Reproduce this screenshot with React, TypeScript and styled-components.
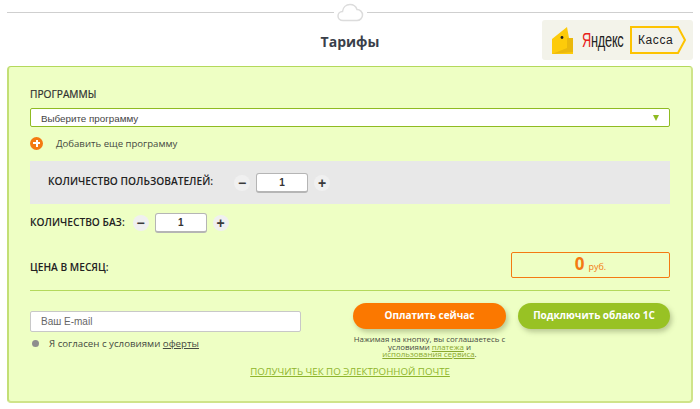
import React from "react";
import styled, { createGlobalStyle } from "styled-components";

const GlobalStyle = createGlobalStyle`
	html, body {
		margin: 0;
		padding: 0;
		background: #fff;
	}

	body {
		font-family: "Open Sans", "Liberation Sans", sans-serif;
		color: #333;
	}
`;

const Page = styled("div")`
	width: 700px;
	height: 409px;
	overflow: hidden;
	padding: 0 7px;
	box-sizing: border-box;
`;

const Divider = styled("div")`
	display: flex;
	align-items: center;
	gap: 3px;
	height: 25px;
`;

const Line = styled("div")`
	flex: 1;
	height: 1px;
	background: #cfcfcf;
`;

const TitleRow = styled("div")`
	display: grid;
	grid-template-columns: 1fr auto 1fr;
	align-items: center;
	height: 40px;
	margin: -5px 0 6px;
`;

const Title = styled("h1")`
	grid-column: 2;
	margin: 2px 0 0;
	font-size: 14px;
	font-weight: 700;
	color: #3a3f4a;
`;

const Badge = styled("div")`
	grid-column: 3;
	justify-self: end;
	display: flex;
	align-items: center;
	width: 151px;
	height: 40px;
	box-sizing: border-box;
	padding-left: 10px;
	background: #f3f3ea;
	border-radius: 3px;
`;

const BadgeWord = styled("span")`
	margin-left: 9px;
	width: 48px;
	font-family: "Liberation Sans", sans-serif;
	font-size: 20px;
	letter-spacing: -0.4px;
	color: #222;
	white-space: nowrap;
	transform: scaleX(0.64);
	transform-origin: left center;

	b {
		font-weight: 400;
		color: #e8201a;
	}
`;

const KassaTag = styled("div")`
	position: relative;
	display: flex;
	align-items: center;
	width: 57px;
	height: 28px;
	padding-left: 8px;
	box-sizing: border-box;
	font-family: "Liberation Sans", sans-serif;
	font-size: 12px;
	letter-spacing: 0.6px;
	color: #222;

	svg {
		position: absolute;
		left: 0;
		top: 0;
	}

	span {
		position: relative;
	}
`;

const Panel = styled("section")`
	height: 337px;
	box-sizing: border-box;
	padding: 20px 21px 0;
	background: #eeffc4;
	border: 1px solid #b4d95c;
	border-right: 2px solid #cfe48a;
	border-bottom: 2px solid #cfe48a;
	border-left: 2px solid #c3df75;
	border-radius: 4px;
`;

const SectionLabel = styled("div")`
	font-size: 10.2px;
	line-height: 14px;
	color: #2f3030;
	-webkit-text-stroke: 0.2px #2f3030;
`;

const SelectBox = styled("div")`
	display: flex;
	align-items: center;
	justify-content: space-between;
	height: 19px;
	margin-top: 7px;
	padding: 1px 10px 0 10px;
	box-sizing: border-box;
	background: #fff;
	border: 1px solid #8fbb22;
	border-radius: 2px;
	font-family: "Liberation Sans", sans-serif;
	font-size: 9.8px;
	color: #444;
`;

const Arrow = styled("i")`
	width: 0;
	height: 0;
	border-left: 3px solid transparent;
	border-right: 3px solid transparent;
	border-top: 6px solid #8fbb22;
`;

const AddRow = styled("div")`
	display: flex;
	align-items: center;
	gap: 13px;
	height: 16px;
	margin-top: 8px;
	font-size: 9.6px;
	color: #454a42;
`;

const AddIcon = styled("span")`
	position: relative;
	width: 13px;
	height: 13px;
	border-radius: 50%;
	background: #f47a12;

	&::before,
	&::after {
		content: "";
		position: absolute;
		background: #fff;
	}

	&::before {
		left: 3px;
		top: 5.5px;
		width: 7px;
		height: 2px;
	}

	&::after {
		left: 5.5px;
		top: 3px;
		width: 2px;
		height: 7px;
	}
`;

const UsersBand = styled("div")`
	display: flex;
	align-items: center;
	gap: 21px;
	height: 43px;
	margin-top: 10px;
	padding-left: 18px;
	background: #e8e8e8;
`;

const CounterRow = styled("div")`
	display: flex;
	align-items: center;
	gap: 8px;
	height: 20px;
	margin-top: 9px;
`;

const BoldLabel = styled("span")<{ $lift?: number }>`
	margin-bottom: ${({ $lift }) => $lift ?? 0}px;
	font-size: 10.2px;
	font-weight: 600;
	line-height: 14px;
	color: #222;
	white-space: nowrap;
`;

const Counter = styled("div")`
	display: flex;
	align-items: center;
	gap: 6px;
`;

const RoundButton = styled("span")`
	display: flex;
	align-items: center;
	justify-content: center;
	width: 16px;
	height: 16px;
	border-radius: 50%;
	background: #f0f0f0;
	font-family: "Liberation Sans", sans-serif;
	font-size: 14px;
	font-weight: 700;
	line-height: 1;
	color: #3a3a3a;
`;

const CountBox = styled("div")`
	display: flex;
	align-items: center;
	justify-content: center;
	width: 52px;
	height: 20px;
	box-sizing: border-box;
	background: #fff;
	border: 1px solid #b5b5b5;
	border-bottom-width: 2px;
	border-radius: 3px;
	font-family: "Liberation Sans", sans-serif;
	font-size: 10px;
	font-weight: 700;
	color: #333;
`;

const PriceRow = styled("div")`
	display: flex;
	align-items: center;
	justify-content: space-between;
	height: 26px;
	margin-top: 19px;
`;

const PriceBox = styled("div")`
	display: flex;
	align-items: baseline;
	justify-content: center;
	gap: 4px;
	width: 159px;
	height: 26px;
	box-sizing: border-box;
	border: 1px solid #f47a12;
	border-radius: 2px;
	color: #f47a12;
	font-size: 9px;
	line-height: 22px;
`;

const PriceValue = styled("b")`
	font-size: 17px;
	font-weight: 700;
`;

const Rule = styled("div")`
	height: 1px;
	margin-top: 12px;
	background: #b4d95c;
`;

const FormRow = styled("div")`
	display: flex;
	margin-top: 12px;
`;

const FormLeft = styled("div")`
	width: 323px;
`;

const EmailBox = styled("div")`
	display: flex;
	align-items: center;
	width: 271px;
	height: 21px;
	margin-top: 8px;
	padding-left: 10px;
	box-sizing: border-box;
	background: #fff;
	border: 1px solid #c8c8c8;
	border-radius: 2px;
	font-family: "Liberation Sans", sans-serif;
	font-size: 10px;
	color: #666;
`;

const AgreeRow = styled("div")`
	display: flex;
	align-items: center;
	gap: 10px;
	height: 14px;
	margin-top: 4px;
	padding-left: 2px;
	font-size: 9.7px;
	color: #454a42;

	a {
		color: #454a42;
		text-decoration: underline;
	}
`;

const Dot = styled("i")`
	width: 7px;
	height: 7px;
	border-radius: 50%;
	background: #8e8e8e;
`;

const PayColumn = styled("div")`
	width: 153px;
	margin-right: 12px;
`;

const PillButton = styled("button")<{ $color: string }>`
	display: block;
	width: ${({ $color }) => ($color === "green" ? "152px" : "153px")};
	height: 26px;
	padding: 0 0 2px;
	border: 0;
	border-radius: 13px;
	background: ${({ $color }) => ($color === "green" ? "#98c224" : "#fb7800")};
	box-shadow: 2px 3px 5px rgba(90, 100, 60, 0.35);
	font-family: "Open Sans", sans-serif;
	font-size: 10px;
	font-weight: 700;
	color: #fff;
`;

const PayNote = styled("p")`
	margin: 7px -4px 0;
	font-size: 7.9px;
	line-height: 7.5px;
	text-align: center;
	color: #454a42;

	a {
		color: #8aa82e;
		text-decoration: underline;
	}
`;

const ReceiptLink = styled("a")`
	display: block;
	margin-top: 6px;
	text-align: center;
	font-size: 9.7px;
	color: #8fb52c;
	text-decoration: underline;
`;

function Stepper({ value }: { value: number }) {
	return (
		<Counter>
			<RoundButton>−</RoundButton>
			<CountBox>{value}</CountBox>
			<RoundButton>+</RoundButton>
		</Counter>
	);
}

export default function App() {
	return (
		<Page>
			<GlobalStyle />
			<Divider>
				<Line />
				<svg width="27" height="19" viewBox="0 0 27 19" fill="none">
					<path
						d="M6 17.500C3 17.500 1 15.500 1 13s2-4.500 4.500-4.500C6 4.500 9 1.500 13 1.500c3.500 0 6 2 7 5 3 0 5.500 2.500 5.500 5.500s-2.500 5.500-5.500 5.500z"
						stroke="#dcdcdc"
						strokeWidth="1.500"
					/>
				</svg>
				<Line />
			</Divider>
			<TitleRow>
				<Title>Тарифы</Title>
				<Badge>
					<svg width="21" height="27" viewBox="0 0 21 27">
						<path d="M0 12 15 0l2 11h4v16H0z" fill="#fdcb0a" />
						<path d="M15 11h6v14L0 27l15-6z" fill="#eab80c" />
						<circle cx="10" cy="10.500" r="1.400" fill="#222" />
					</svg>
					<BadgeWord>
						<b>Я</b>ндекс
					</BadgeWord>
					<KassaTag>
						<svg width="57" height="28" viewBox="0 0 57 28" fill="none">
							<path d="M1 1h47l7 13-7 13H1z" stroke="#fdc300" strokeWidth="2" />
						</svg>
						<span>Касса</span>
					</KassaTag>
				</Badge>
			</TitleRow>
			<Panel>
				<SectionLabel>ПРОГРАММЫ</SectionLabel>
				<SelectBox>
					Выберите программу
					<Arrow />
				</SelectBox>
				<AddRow>
					<AddIcon />
					Добавить еще программу
				</AddRow>
				<UsersBand>
					<BoldLabel $lift={3}>КОЛИЧЕСТВО ПОЛЬЗОВАТЕЛЕЙ:</BoldLabel>
					<Stepper value={1} />
				</UsersBand>
				<CounterRow>
					<BoldLabel $lift={3}>КОЛИЧЕСТВО БАЗ:</BoldLabel>
					<Stepper value={1} />
				</CounterRow>
				<PriceRow>
					<BoldLabel $lift={-3}>ЦЕНА В МЕСЯЦ:</BoldLabel>
					<PriceBox>
						<PriceValue>0</PriceValue> руб.
					</PriceBox>
				</PriceRow>
				<Rule />
				<FormRow>
					<FormLeft>
						<EmailBox>Ваш E-mail</EmailBox>
						<AgreeRow>
							<Dot />
							<span>
								Я согласен с условиями <a href="#offer">оферты</a>
							</span>
						</AgreeRow>
					</FormLeft>
					<PayColumn>
						<PillButton $color="orange">Оплатить сейчас</PillButton>
						<PayNote>
							Нажимая на кнопку, вы соглашаетесь с
							<br />
							условиями <a href="#pay">платежа</a> и
							<br />
							<a href="#use">использования сервиса</a>.
						</PayNote>
					</PayColumn>
					<PillButton $color="green">Подключить облако 1С</PillButton>
				</FormRow>
				<ReceiptLink href="#receipt">ПОЛУЧИТЬ ЧЕК ПО ЭЛЕКТРОННОЙ ПОЧТЕ</ReceiptLink>
			</Panel>
		</Page>
	);
}
